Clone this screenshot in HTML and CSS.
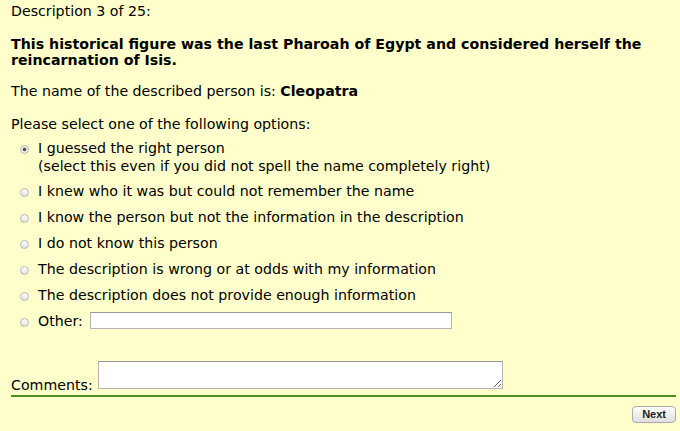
FILE: index.html
```html
<!DOCTYPE html>
<html lang="en">
<head>
  <meta charset="UTF-8">
  <title>Description 3 of 25</title>
  <link rel="stylesheet" href="styles.css">
</head>
<body>

  <!-- Question header -->
  <div class="counter">Description 3 of 25:</div>
  <div class="question">This historical figure was the last Pharoah of Egypt and considered herself the reincarnation of Isis.</div>
  <div class="answer">The name of the described person is: <b>Cleopatra</b></div>

  <!-- Options -->
  <form class="survey">
    <div class="prompt">Please select one of the following options:</div>
    <ul class="options">
      <li class="first">
        <input type="radio" name="opt" class="radio" checked>
        <span>I guessed the right person<br>(select this even if you did not spell the name completely right)</span>
      </li>
      <li><input type="radio" name="opt" class="radio"><span>I knew who it was but could not remember the name</span></li>
      <li><input type="radio" name="opt" class="radio"><span>I know the person but not the information in the description</span></li>
      <li><input type="radio" name="opt" class="radio"><span>I do not know this person</span></li>
      <li><input type="radio" name="opt" class="radio"><span>The description is wrong or at odds with my information</span></li>
      <li><input type="radio" name="opt" class="radio"><span>The description does not provide enough information</span></li>
      <li>
        <input type="radio" name="opt" class="radio">
        <span>Other:</span>
        <input type="text" class="other">
      </li>
    </ul>

    <div class="comments">
      <label>Comments:</label>
      <textarea class="comment-box"></textarea>
    </div>

    <div class="actions">
      <button type="button" class="next">Next</button>
    </div>
  </form>

</body>
</html>
```

FILE: styles.css
```css
body {
  font-family: "DejaVu Sans", Verdana, sans-serif;
  font-size: 14.2px;
  color: #000;
  background-color: #ffffcc;
  margin: 0;
  padding: 0 4px 0 11px;
}
.counter {
  line-height: 18px;
  padding-top: 2px;
}
.question {
  font-weight: bold;
  line-height: 16px;
  margin-top: 16px;
}
.answer {
  line-height: 18px;
  margin-top: 14px;
}
.prompt {
  line-height: 18px;
  margin-top: 15px;
}
.options {
  list-style: none;
  margin: 6px 0 0 0;
  padding: 0 0 0 9px;
}
.options li {
  display: flex;
  align-items: flex-start;
  line-height: 18px;
  margin-bottom: 8px;
}
.options li.first {
  margin-bottom: 7px;
}
.radio {
  -webkit-appearance: none;
  appearance: none;
  width: 9px;
  height: 9px;
  margin: 6px 9px 0 0;
  border: 1px solid #b8b8b8;
  border-radius: 50%;
  background: linear-gradient(#fdfdfd, #e2e2e2);
  flex-shrink: 0;
}
.radio:checked {
  background: radial-gradient(circle, #555 0, #555 1.6px, #f4f4f4 2.2px, #e0e0e0 100%);
}
.other {
  width: 358px;
  height: 13px;
  margin: 0 0 0 7px;
  padding: 1px;
  border: 1px solid #b4b4b4;
  border-top-color: #999;
  background: #fff;
}
.comments {
  display: flex;
  align-items: flex-end;
  margin-top: 31px;
  border-bottom: 2px solid #4c8c1c;
  padding-bottom: 3px;
}
.comments label {
  line-height: 14px;
}
.comment-box {
  width: 401px;
  height: 24px;
  margin: 0 0 3px 5px;
  padding: 1px;
  border: 1px solid #b4b4b4;
  border-top-color: #999;
  resize: both;
  font-family: inherit;
}
.actions {
  display: flex;
  justify-content: flex-end;
  margin-top: 9px;
}
.next {
  font-family: "Liberation Sans", Arial, sans-serif;
  font-size: 11px;
  font-weight: bold;
  color: #222;
  padding: 1px 9px 2px;
  border: 1px solid #aaa;
  border-radius: 4px;
  background: linear-gradient(#ffffff, #dedede);
}
```
